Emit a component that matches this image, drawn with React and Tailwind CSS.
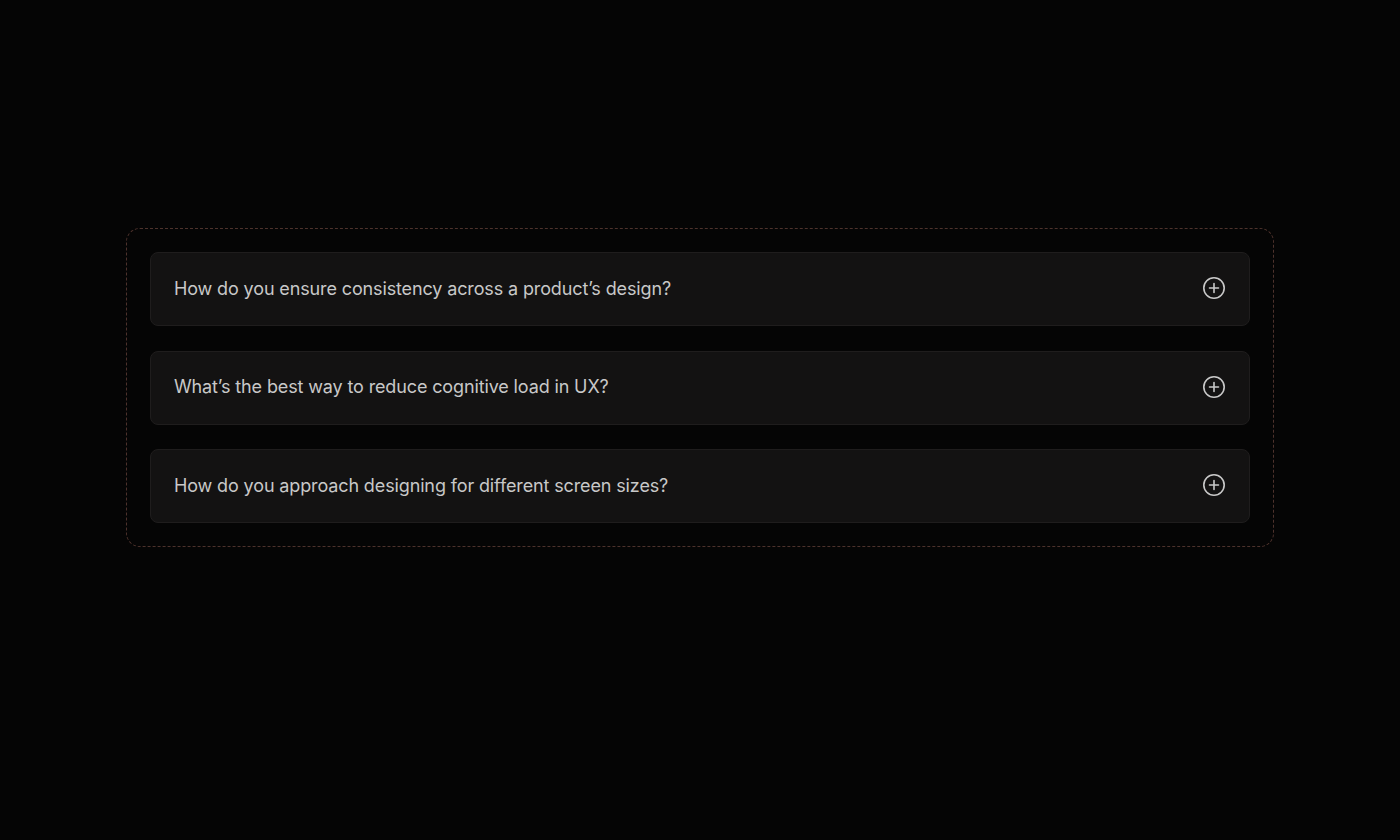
import React from "react";

const items = [
  "How do you ensure consistency across a product\u2019s design?",
  "What\u2019s the best way to reduce cognitive load in UX?",
  "How do you approach designing for different screen sizes?",
];

function PlusCircle() {
  return (
    <svg className="-translate-y-[1px]" width="24" height="24" viewBox="0 0 24 24" fill="none" stroke="#c9c9c9" strokeWidth="1.6" strokeLinecap="round">
      <circle cx="12" cy="12" r="10.2" />
      <path d="M12 7.5v9M7.5 12h9" />
    </svg>
  );
}

export default function App() {
  return (
    <div className="min-h-[840px] w-full bg-[#050505] flex items-start justify-center pt-[228px]" style={{ fontFamily: "Inter, 'Noto Sans', sans-serif" }}>
      <div className="w-[1148px] rounded-[14px] border border-dashed border-[#4d322c] px-[23px] pt-[23px] pb-[23px] flex flex-col gap-[24.5px]">
        {items.map((q) => (
          <div key={q} className="h-[74px] rounded-[8px] border border-[#1f1d1d] bg-[#131212] flex items-center justify-between pl-[23px] pr-[23px]">
            <span className="text-[18px] text-[#c8c8c8] tracking-[-0.13px] -translate-y-[1px]">{q}</span>
            <PlusCircle />
          </div>
        ))}
      </div>
    </div>
  );
}
